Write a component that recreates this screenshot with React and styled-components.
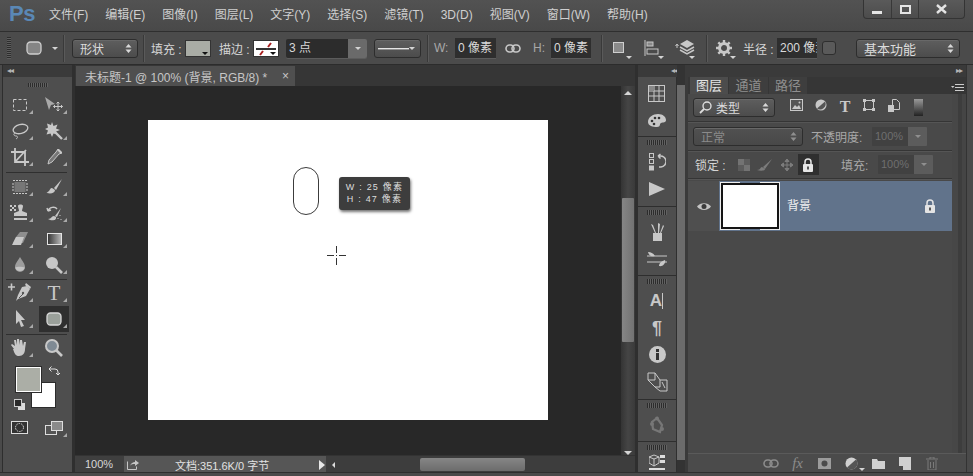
import React from "react";
import styled, { createGlobalStyle } from "styled-components";

const Global = createGlobalStyle`
  html, body { margin: 0; padding: 0; background: #4a4a4a; }
  * { box-sizing: border-box; }
`;
const FONT = `"Liberation Sans", "Noto Sans CJK SC", sans-serif`;
const Window = styled.div`
  width: 973px; height: 476px; overflow: hidden; display: flex; flex-direction: column;
  background: #4a4a4a; color: #d6d6d6; font: 12px ${FONT};
`;
const TitleBar = styled.header`
  height: 32px; display: flex; align-items: flex-start; border-bottom: 1px solid #2f2f2f;
  background: linear-gradient(#525252, #494949); padding-left: 9px;
`;
const Logo = styled.div`
  width: 40px; margin-top: 1px; font: bold 22px/26px "Liberation Sans", sans-serif; color: #5a88b6; letter-spacing: -0.5px;
`;
const Menu = styled.nav`display: flex; flex: 1; gap: 17px; padding-top: 7px;`;
const MenuItem = styled.span`font-size: 12px; line-height: 17px; color: #cfcfcf; white-space: nowrap;`;
const WinButtons = styled.div`
  display: flex; height: 19px; margin-right: 8px; border: 1px solid #343434; border-top: 0; border-radius: 0 0 4px 4px;
  background: linear-gradient(#5a5a5a, #4c4c4c);
`;
const WinButton = styled.div`
  width: ${p => p.$w}px; display: flex; align-items: center; justify-content: center;
  & + & { border-left: 1px solid #383838; }
`;

const OptionsBar = styled.div`
  height: 33px; display: flex; align-items: center; padding-left: 7px; border-bottom: 1px solid #2c2c2c; background: #4b4b4b;
`;
const VGrip = styled.div`
  width: 4px; height: 22px;
  background: repeating-linear-gradient(#2d2d2d 0 1px, #5d5d5d 1px 2px);
`;
const OptDivider = styled.div`width: 1px; height: 27px; margin-left: ${p => p.$ml}px; background: #393939; box-shadow: 1px 0 0 #5a5a5a;`;
const OptSlot = styled.div`
  width: ${p => p.$w}px; margin-left: ${p => p.$ml}px; height: 20px; position: relative; display: flex; align-items: center; justify-content: flex-start;
`;
const OptLabel = styled.span`
  width: ${p => p.$w}px; margin-left: ${p => p.$ml}px; white-space: nowrap; font-size: 12px; color: ${p => p.$dim ? "#a8a8a8" : "#d6d6d6"};
`;
const Select = styled.div`
  width: ${p => p.$w}px; height: ${p => p.$h || 19}px; margin-left: ${p => p.$ml || 0}px; border: 1px solid #2d2d2d; border-radius: 3px;
  background: ${p => p.$dim ? "linear-gradient(#515151,#484848)" : "linear-gradient(#5e5e5e,#4c4c4c)"};
  box-shadow: inset 0 1px 0 #686868; display: flex; align-items: center; justify-content: space-between;
  padding: 0 5px 0 ${p => p.$pl || 7}px; color: ${p => p.$dim ? "#8b8b8b" : "#dcdcdc"}; font-size: ${p => p.$fs || 12}px; white-space: nowrap;
`;
const SelectLabel = styled.span`display: flex; align-items: center; gap: 4px;`;
const Swatch = styled.div`
  width: 26px; height: 17px; margin-left: ${p => p.$ml}px; position: relative; border: 1px solid #333; background: ${p => p.$bg};
`;
const SwatchCaret = styled.i`
  position: absolute; right: 2px; bottom: 1px; width: 0; height: 0; border: 3px solid transparent; border-top-color: #111; border-bottom: 0;
`;
const Combo = styled.div`
  width: 81px; height: 19px; margin-left: ${p => p.$ml}px; display: flex; border-radius: 2px; overflow: hidden; box-shadow: 0 1px 0 #5c5c5c;
`;
const ComboText = styled.div`flex: 1; background: #2c2c2c; padding-left: 3px; font-size: 12px; line-height: 19px; color: #d8d8d8;`;
const ComboBtn = styled.div`
  width: 19px; background: #6a6a6a; display: flex; align-items: center; justify-content: center;
`;
const Caret = styled.i`
  display: block; width: 0; height: 0; border: 3px solid transparent; border-top-color: #d4d4d4; border-bottom: 0;
`;
const CornerCaret = styled(Caret)`position: absolute; right: 0; bottom: -1px;`;
const NumInput = styled.div`
  width: ${p => p.$w}px; height: 20px; margin-left: ${p => p.$ml}px; background: #2e2e2e; overflow: hidden; white-space: nowrap;
  padding-left: 3px; font-size: 12px; line-height: 20px; color: #dadada; box-shadow: 0 1px 0 #5c5c5c;
`;
const CheckBox = styled.div`
  width: 14px; height: 14px; margin-left: ${p => p.$ml}px; border: 1px solid #2e2e2e; border-radius: 3px; background: #5a5a5a;
`;

const Workspace = styled.main`height: 407px; display: flex; padding-left: 2px;`;
const Bottom = styled.div`flex: 1; background: #4a4a4a; border-top: 1px solid #2e2e2e;`;

const ToolPanel = styled.aside`
  width: 73px; display: flex; flex-direction: column; background: #4e4e4e; border-left: 1px solid #2e2e2e; border-right: 3px solid #2f2f2f;
`;
const CollapseStrip = styled.div`
  height: 12px; flex: none; display: flex; align-items: center; padding: 0 ${p => p.$pr || 4}px 0 ${p => p.$pl || 4}px; background: #3a3a3a;
  justify-content: ${p => p.$j || "flex-start"}; font-size: 8px; line-height: 12px; letter-spacing: -1px; color: #b5b5b5;
`;
const HGrip = styled.div`
  width: 20px; height: ${p => p.$h || 5}px; margin: ${p => p.$m || "3px auto"};
  background: repeating-linear-gradient(90deg, #2c2c2c 0 1px, #616161 1px 2px);
`;
const GripBox = styled.div`height: ${p => p.$h}px; padding-top: ${p => p.$pt}px;`;
const ToolGrid = styled.div`display: grid; grid-template-columns: 34px 34px; grid-auto-rows: 26px;`;
const ToolDivider = styled.div`
  height: ${p => p.$h}px; position: relative;
  &::after { content: ""; position: absolute; left: 3px; right: 5px; top: ${p => p.$t}px; height: 1px; background: #2f2f2f; }
`;
const Tool = styled.div`
  position: relative; display: flex; align-items: center; justify-content: center; margin: 0 2px;
  background: ${p => p.$active ? "#2f2f2f" : "transparent"};
  ${p => p.$more && `&::after { content:""; position:absolute; right:2px; bottom:4px; width:0; height:0; border-style:solid; border-width:0 0 4px 4px; border-color:transparent transparent #a9a9a9 transparent; }`}
`;
const Swatches = styled.div`height: 54px; position: relative;`;
const Fg = styled.div`position: absolute; z-index: 1; left: 13px; top: 6px; width: 25px; height: 25px; background: #abaea6; border: 1px solid #fff; box-shadow: 0 0 0 1px #2c2c2c;`;
const Bg = styled.div`position: absolute; left: 28px; top: 21px; width: 25px; height: 26px; background: #fff; border: 1px solid #2c2c2c;`;
const SwapIcon = styled.div`position: absolute; left: 44px; top: 3px;`;
const DefaultIcon = styled.div`position: absolute; left: 11px; top: 38px;`;
const MaskRow = styled.div`display: grid; grid-template-columns: 34px 34px; height: 26px;`;

const DocColumn = styled.section`width: 562px; display: flex; flex-direction: column; background: #3b3b3b; border-right: 2px solid #2f2f2f;`;
const TabStrip = styled.div`height: 21px; display: flex; background: #363636; padding-top: 1px;`;
const DocTab = styled.div`
  width: 219px; margin-left: 1px; display: flex; align-items: center; justify-content: space-between; padding: 0 6px 0 9px;
  background: #4f4f4f; color: #c6c6c6; font-size: 12px; white-space: nowrap;
`;
const DocBody = styled.div`flex: 1; display: flex; min-height: 0;`;
const Viewport = styled.div`width: 546px; padding-bottom: 2px; background: #282828; display: flex; align-items: center; justify-content: center;`;
const Paper = styled.div`width: 400px; height: 300px; background: #fff; position: relative;`;
const DrawnShape = styled.div`position: absolute; left: 145px; top: 47px; width: 26px; height: 48px; border: 1px solid #3c3c3c; border-radius: 13px;`;
const SizeTip = styled.div`
  position: absolute; left: 191px; top: 57px; width: 71px; height: 33px; border-radius: 3px; background: #3d3d3d;
  box-shadow: 1px 2px 3px rgba(0,0,0,.55); padding-top: 4px; text-align: center; color: #dedede; font-size: 9px; line-height: 12px; letter-spacing: 1.2px; white-space: nowrap;
`;
const CrossCursor = styled.div`position: absolute; left: 179px; top: 126px; line-height: 0;`;
const VScroll = styled.div`
  flex: 1; background: linear-gradient(90deg,#343434,#454545 50%,#3a3a3a); display: flex; flex-direction: column; align-items: center; padding-top: 5px;
`;
const Arrow = styled.i`
  display: block; width: 0; height: 0; border: 4px solid transparent; border-top: 0; border-bottom-color: #d5d5d5;
  ${p => p.$down && "transform: rotate(180deg);"}
`;
const VThumb = styled.div`width: 12px; height: 144px; margin-top: 103px; background: linear-gradient(90deg,#858585,#727272); border-radius: 1px;`;
const VTrackRest = styled.div`flex: 1;`;
const StatusBar = styled.div`height: 18px; display: flex; align-items: stretch; background: #3f3f3f; border-top: 1px solid #333; margin-bottom: -1px;`;
const ZoomValue = styled.div`width: 49px; padding-left: 10px; line-height: 16px; font-size: 11px; color: #d8d8d8;`;
const DocInfo = styled.div`
  width: 202px; background: #565656; display: flex; align-items: center; padding-left: 2px; font-size: 11px; color: #e2e2e2; white-space: nowrap;
`;
const DocInfoText = styled.span`margin-left: 35px; flex: 1;`;
const PlayMark = styled.i`width: 0; height: 0; margin-right: 1px; border: 5px solid transparent; border-right: 0; border-left: 6px solid #e8e8e8;`;
const HScroll = styled.div`flex: 1; display: flex; align-items: center; padding-left: 6px; background: #3d3d3d;`;
const LeftMark = styled.i`width: 0; height: 0; border: 3px solid transparent; border-left: 0; border-right: 3px solid #ddd;`;
const HThumb = styled.div`width: 105px; height: 13px; margin-left: 85px; background: linear-gradient(#868686,#6c6c6c); border-radius: 2px;`;

const DockWrap = styled.aside`width: 40px; display: flex; flex-direction: column; background: #4e4e4e; border-left: 1px solid #2f2f2f; border-right: 1px solid #2f2f2f;`;
const DockHead = styled(CollapseStrip)`justify-content: center; padding-left: 36px; overflow: visible;`;
const DockGroup = styled.div`
  height: ${p => p.$h}px; flex: none; border-bottom: 1px solid ${p => p.$last ? "transparent" : "#2e2e2e"}; display: flex; flex-direction: column; align-items: center;
  padding-top: ${p => p.$pt || 0}px;
`;
const DockGripBox = styled.div`height: 11px; flex: none; padding-top: 3px;`;
const DockItem = styled.div`height: ${p => p.$h || 27}px; display: flex; align-items: center; justify-content: center; flex: none;`;
const Gutter = styled.div`
  width: 11px; background: #6b6b6b; display: flex; flex-direction: column; justify-content: space-between;
  border-right: 3px solid #3a3a3a;
`;
const GutterCap = styled.div`height: ${p => p.$h}px; background: ${p => p.$c};`;

const LayersColumn = styled.section`width: 279px; display: flex; flex-direction: column; border-right: 1px solid #333;`;
const LayersBody = styled.div`flex: 1; display: flex; min-height: 0;`;
const LayersPanel = styled.div`width: 264px; display: flex; flex-direction: column; background: #494949;`;
const SideRail = styled.div`flex: 1; background: linear-gradient(90deg,#474747 0 6px,#3d3d3d 6px 10px,#454545 10px);`;
const TabsRow = styled.div`height: 17px; flex: none; display: flex; background: #363636; padding-left: 2px; position: relative;`;
const PanelTab = styled.div`
  width: ${p => p.$w}px; text-align: center; font-size: 13px; line-height: 17px;
  background: ${p => p.$on ? "#4c4c4c" : "#3e3e3e"}; color: ${p => p.$on ? "#e4e4e4" : "#8f8f8f"}; margin-right: 1px;
`;
const PanelMenu = styled.div`position: absolute; right: 2px; top: 6px; line-height: 0;`;
const FilterRow = styled.div`
  height: 28px; display: flex; align-items: center; padding-left: 5px; border-bottom: 1px solid #353535; box-shadow: 0 1px 0 #555;
`;
const FilterIcon = styled.div`width: 24.4px; display: flex; justify-content: center; line-height: 0;`;
const FilterIcons = styled.div`display: flex; margin-left: 9px;`;
const ModeRow = styled.div`
  height: 29px; display: flex; align-items: center; padding-left: 5px; border-bottom: 1px solid #353535; box-shadow: 0 1px 0 #555;
`;
const LockRow = styled.div`
  height: 28px; display: flex; align-items: center; padding-left: 7px; border-bottom: 1px solid #353535; box-shadow: 0 1px 0 #555;
`;
const LockIcons = styled.div`display: flex; margin-left: 8px; align-items: center;`;
const LockIcon = styled.div`
  width: 21.5px; height: 21px; display: flex; align-items: center; justify-content: center; line-height: 0;
  background: ${p => p.$on ? "#2f2f2f" : "transparent"};
`;
const DimInput = styled.div`
  width: 55px; height: 19px; margin-left: 4px; display: flex; overflow: hidden; border-radius: 1px;
`;
const DimText = styled.div`flex: 1; background: #414141; color: #6f6f6f; font-size: 11px; line-height: 19px; padding-left: 3px;`;
const DimBtn = styled.div`width: 19px; background: #5c5c5c; display: flex; align-items: center; justify-content: center;`;
const DimCaret = styled(Caret)`border-top-color: #8f8f8f;`;
const LayerList = styled.div`flex: 1; padding-top: 2px;`;
const LayerRow = styled.div`height: 50px; display: flex; background: #61738b;`;
const EyeCell = styled.div`width: 31px; background: #4f4f4f; display: flex; align-items: center; justify-content: center;`;
const Thumb = styled.div`
  width: 58px; height: 46px; margin: 2px 0 0 2px; position: relative; background: #fff; border: 2px solid #151515;
  &::before {
    content: ""; position: absolute; inset: -3px;
    background:
      linear-gradient(#eee,#eee) 0 0/20px 1px no-repeat,
      linear-gradient(#eee,#eee) 100% 0/20px 1px no-repeat,
      linear-gradient(#eee,#eee) 0 100%/20px 1px no-repeat,
      linear-gradient(#eee,#eee) 100% 100%/20px 1px no-repeat,
      linear-gradient(#eee,#eee) 0 0/1px 100% no-repeat,
      linear-gradient(#eee,#eee) 100% 0/1px 100% no-repeat;
  }
`;
const LayerName = styled.div`margin-left: 8px; width: 137px; line-height: 50px; color: #f0f0f0; font-size: 12px;`;
const LayerLock = styled.div`display: flex; align-items: center; line-height: 0;`;
const ActionBar = styled.div`
  height: 19px; flex: none; display: flex; justify-content: flex-end; align-items: center; padding-right: 21px; border-top: 1px solid #5a5a5a; background: #4b4b4b;
`;
const ActionIcon = styled.div`width: 26.8px; display: flex; justify-content: center; line-height: 0; position: relative;`;

const S = ({ w = 20, h = 20, vb, children }) => (
  <svg width={w} height={h} viewBox={vb || `0 0 ${w} ${h}`} fill="none">{children}</svg>
);
const L = "#c8c8c8";
const M = "#a9a9a9";

const Marquee = () => <S><rect x="3.500" y="4.500" width="13" height="11" stroke={L} strokeDasharray="3 2" /></S>;
const MoveTool = () => <S w={22} h={20}><path d="M2 2l10 7-4 1-2 5z" fill={M} /><path d="M15 7v9M10.500 11.500h9M15 7l-1.500 1.500M15 7l1.500 1.500M15 16l-1.500-1.500M15 16l1.500-1.500M10.500 11.500l1.500-1.500M10.500 11.500l1.500 1.500M19.500 11.500l-1.500-1.500M19.500 11.500l-1.500 1.500" stroke={L} /></S>;
const Lasso = () => <S><ellipse cx="10.500" cy="8" rx="7.500" ry="4.500" transform="rotate(-14 10.500 8)" stroke={L} strokeWidth="1.300" /><path d="M5 12c-2 1-1 3 1 3s2 2 0 3" stroke={L} /></S>;
const Wand = () => <S><path d="M8 1l1.500 4 4-1.500-1.500 4 4 1.500-4 1.500 1.500 3-4-1-1.500 3.500-1.500-3.500-4 1 1.500-4-3-1.500 3-1.500-1-4 4 1.500z" fill={L} /><path d="M11 11l7 7" stroke={L} strokeWidth="2.400" /></S>;
const Crop = () => <S><path d="M5 1v14h14M1 5h14v14M5 15L16 3" stroke={L} strokeWidth="1.800" /></S>;
const Dropper = () => <S><path d="M14 2l4 4-3 1-7 8-4 2 1-4 7-8z" stroke={L} fill="#777" /><path d="M13 3l2-1 3 3-1 2z" fill={L} /></S>;
const Heal = () => <S><rect x="4.500" y="5" width="11" height="10" fill="#777" /><path d="M3 3.500h14M3 16.500h14M2 7h2M2 10h2M2 13h2M16 7h2M16 10h2M16 13h2" stroke={L} strokeDasharray="2 1" /></S>;
const Brush = () => <S><path d="M18 2l-8 9 2 2z" fill={L} /><path d="M8 11c-2 0-2 2-3 3s-3 2-2 2c4 1 8 0 8-3z" fill={L} /></S>;
const Stamp = () => <S w={22} h={20}><path d="M1 2h2v2H1zM5 2h2v2H5zM3 4h2v2H3zM1 6h2v2H1zM5 6h2v2H5z" fill={L} /><path d="M9 3c0-2 5-2 5 0 0 2-1 3-1 5l5 2v3H5v-3l5-2c0-2-1-3-1-5zM5 15h13v2H5z" fill={L} /></S>;
const HistBrush = () => <S w={22} h={20}><path d="M5 8c1-4 7-5 9-2M5 8l-1-3M5 8l3-1" stroke={L} strokeWidth="1.400" /><path d="M18 5l-6 8 2 1zM11 13c-3 0-2 3-6 3 3 2 9 2 8-2z" fill={L} /><path d="M17 12v1M15 15v1M18 16v1" stroke={L} /></S>;
const Eraser = () => <S><path d="M10 3h8l-5 11H3l3-6z" fill="#8e8e8e" /><path d="M6 8h8l-3 8H2z" fill={L} /></S>;
const Gradient = () => (
  <S>
    <defs><linearGradient id="grd"><stop offset="0" stopColor="#333" /><stop offset="1" stopColor="#bbb" /></linearGradient></defs>
    <rect x="3.500" y="4.500" width="14" height="11" fill="url(#grd)" stroke="#e4e4e4" />
  </S>
);
const Drop = () => <S><path d="M10 2c3 5 5 7 5 10a5 5 0 0 1-10 0c0-3 2-5 5-10z" fill="#9d9d9d" /><path d="M5.200 12.500c2-1 7-1 9.600 0a5 5 0 0 1-9.600 0z" fill="#c4c4c4" /></S>;
const Sponge = () => <S><circle cx="8" cy="8" r="6" fill={L} /><path d="M12 12l6 6" stroke={L} strokeWidth="2.600" /></S>;
const Pen = () => <S w={26} h={22}><path d="M1 5h7M4.500 1.500v7" stroke={L} strokeWidth="1.600" /><path d="M20 4l3 3-4 7-8 3-2 2 2-6 4-8z" fill={L} /><path d="M12 16l4-4" stroke="#555" /><circle cx="16" cy="11" r="1.200" fill="#555" /><path d="M19 1l5 4-1 2-5-4z" fill={L} /></S>;
const TypeT = styled.span`font: ${p => p.$size || 21}px/1 "Liberation Serif", serif; color: ${p => p.$c || L};`;
const PathSelect = () => <S><path d="M6 1l9 10h-4l3 6-3 1-2-6-3 3z" fill={L} /></S>;
const RoundRectTool = ({ c = "#9aa09a", s = "#d8d8d8" }) => <S><rect x="3" y="4" width="14" height="12" rx="3.500" fill={c} stroke={s} strokeWidth="1.300" /></S>;
const Hand = () => <S w={22} h={20}><path d="M5 11L2 7l1-1 3 2-1-6h2l1 5V1h2l1 6V2h2l1 6 1-4h2l-1 7c0 4-2 7-6 7-3 0-4-1-6-7z" fill={L} /></S>;
const Loupe = () => <S w={20} h={20}><circle cx="8" cy="8" r="6" fill="#7f8a94" stroke={L} strokeWidth="2" /><path d="M12 12l6 6" stroke={L} strokeWidth="2.600" /></S>;
const Swap = () => <S w={13} h={13}><path d="M2 5h6q3 0 3 3v3M2 5l2.500-2.500M2 5l2.500 2.500M11 11l-2-2M11 11l2-2" stroke="#e0e0e0" /></S>;
const DefaultColors = () => <S w={11} h={11}><rect x="4" y="4" width="7" height="7" fill="#ddd" /><rect x=".5" y=".5" width="7" height="7" fill="#2a2a2a" stroke="#ccc" /></S>;
const MaskMode = () => <S w={18} h={14}><rect x=".5" y=".5" width="16" height="12" stroke="#ddd" fill="#333" /><circle cx="8.500" cy="6.500" r="4" stroke="#ddd" strokeDasharray="1.500 1" /></S>;
const ScreenMode = () => <S w={18} h={14}><rect x=".5" y="4.500" width="11" height="9" fill="#555" stroke="#ddd" /><rect x="6.500" y=".5" width="11" height="9" fill="#8a8a8a" stroke="#ddd" /></S>;

const GridPanel = () => <S w={18} h={18}><rect x=".5" y=".5" width="16" height="16" stroke={L} /><path d="M6 .5v16M11 .5v16M.5 6h16M.5 11h16" stroke={L} /><rect x="1" y="1" width="5" height="5" fill="#888" /></S>;
const Palette = () => <S w={20} h={16}><path d="M1 9c0-5 5-8 10-8s8 3 8 6-3 2-5 3 0 4-4 4-9-1-9-5z" fill={L} /><circle cx="5" cy="8" r="1.300" fill="#333" /><circle cx="8" cy="5" r="1.300" fill="#333" /><circle cx="12" cy="5" r="1.300" fill="#333" /><circle cx="7" cy="11" r="1.300" fill="#333" /></S>;
const History = () => <S w={17} h={18}><rect x=".5" y=".5" width="4" height="4" stroke={L} /><rect x=".5" y="6.500" width="4" height="4" stroke={L} /><rect y="12.500" width="5" height="5" fill={L} /><path d="M9 3h2a5 5 0 0 1 1 11h-2M9 3l2.500-2M9 3l2.500 2.500" stroke={L} strokeWidth="1.500" /></S>;
const Play = () => <S w={18} h={14}><path d="M1 0l16 7-16 7z" fill={L} /></S>;
const BrushCup = () => <S w={16} h={20}><path d="M4 11h9v8H4z" fill={L} /><path d="M6 11L2 2l2 1 3 8zM9 11V1l2 1-1 9zM11 11l3-8 1 1-3 7z" fill={L} /></S>;
const Sliders = () => <S w={20} h={16}><path d="M0 5h20M0 11h20" stroke={L} /><path d="M1 1c3 0 5 1 7 4-3 1-6 0-7-4zM12 15c0-3 3-5 6-6 1 3-2 7-6 6z" fill={L} /></S>;
const SansGlyph = styled(TypeT)`font-family: "Liberation Sans", sans-serif; font-weight: 700;`;
const CharPanel = () => <><SansGlyph $size={17}>A</SansGlyph><S w={2} h={16}><path d="M.5 0v16" stroke={L} /></S></>;
const ParaPanel = () => <SansGlyph $size={18}>¶</SansGlyph>;
const InfoPanel = () => <S w={17} h={17}><circle cx="8.500" cy="8.500" r="8.500" fill={L} /><rect x="7" y="3" width="3" height="3" fill="#333" /><rect x="7" y="7" width="3" height="7" fill="#333" /></S>;
const Trans = () => <S w={21} h={20}><path d="M1 1h7l5 7v7M1 1v7l7 7h5M8 1v7H1" stroke={L} /><path d="M13 8h7v11h-7l-5-4" stroke={L} /><path d="M15 10l3 6" stroke={L} /></S>;
const Mesh = () => <S w={16} h={18}><path d="M8 2L3 6l1 7 7 3 2-7z" stroke="#777" strokeWidth="2.200" /><circle cx="8" cy="2.500" r="2" fill="#777" /><circle cx="3" cy="8" r="2" fill="#777" /><circle cx="13" cy="13" r="2" fill="#777" /></S>;
const Cube = () => <S w={16} h={16}><path d="M5 1l5 2v6l-5 3-5-3V3z" stroke={L} /><path d="M0 3l5 2 5-2M5 5v7" stroke={L} /><path d="M11 1h5v3h-5zM11 6h5v3h-5zM0 14h16v2H0z" fill="#ddd" /></S>;

const UpDown = ({ c = "#d8d8d8" }) => <S w={7} h={11}><path d="M3.500 1L6.500 4.500h-6zM3.500 10L6.500 6.500h-6z" fill={c} /></S>;
const LinkIcon = ({ c = L }) => <S w={16} h={9}><rect x="1" y="1" width="8" height="7" rx="3.500" stroke={c} strokeWidth="1.600" /><rect x="7" y="1" width="8" height="7" rx="3.500" stroke={c} strokeWidth="1.600" /></S>;
const PadLock = ({ c = "#e6e6e6" }) => <S w={12} h={14}><path d="M3 6V4a3 3 0 0 1 6 0v2" stroke={c} strokeWidth="1.500" /><rect x="1" y="6" width="10" height="8" rx="1" fill={c} /><rect x="5" y="8.500" width="2" height="3" fill="#555" /></S>;
const Eye = () => <S w={14} h={9}><path d="M0 4.500C3 0 11 0 14 4.500 11 9 3 9 0 4.500z" fill="#c4c4c4" /><circle cx="7" cy="4.500" r="2.500" fill="#3b3b3b" /></S>;
const Gear = () => <S w={16} h={16}><circle cx="8" cy="8" r="4.500" stroke={L} strokeWidth="3" /><path d="M8 0v3M8 13v3M0 8h3M13 8h3M2.300 2.300l2.100 2.100M11.600 11.600l2.100 2.100M2.300 13.700l2.100-2.100M11.600 4.400l2.100-2.100" stroke={L} strokeWidth="2.400" /></S>;

function App() {
  return (
    <>
      <Global />
      <Window>
        <TitleBar>
          <Logo>Ps</Logo>
          <Menu>
            {["文件(F)", "编辑(E)", "图像(I)", "图层(L)", "文字(Y)", "选择(S)", "滤镜(T)", "3D(D)", "视图(V)", "窗口(W)", "帮助(H)"].map(m => <MenuItem key={m}>{m}</MenuItem>)}
          </Menu>
          <WinButtons>
            <WinButton $w={27}><S w={11} h={12}><rect y="8" width="10" height="3" fill="#e4e4e4" /></S></WinButton>
            <WinButton $w={27}><S w={11} h={9}><rect x="1" y="1" width="9" height="7" stroke="#e4e4e4" strokeWidth="2" /></S></WinButton>
            <WinButton $w={46}><S w={11} h={10}><path d="M1 1l9 8M10 1L1 9" stroke="#e4e4e4" strokeWidth="2.400" /></S></WinButton>
          </WinButtons>
        </TitleBar>

        <OptionsBar>
          <VGrip />
          <OptSlot $ml={13} $w={20}><RoundRectTool c="#858585" s="#cfcfcf" /></OptSlot>
          <OptSlot $ml={8} $w={6}><Caret /></OptSlot>
          <OptDivider $ml={5} />
          <Select $w={66} $ml={8}>形状<UpDown /></Select>
          <OptDivider $ml={5} />
          <OptLabel $ml={7} $w={30}>填充 :</OptLabel>
          <Swatch $ml={4} $bg="#a9aca5"><SwatchCaret /></Swatch>
          <OptLabel $ml={8} $w={30}>描边 :</OptLabel>
          <Swatch $ml={4} $bg="#fff">
            <S w={24} h={15}><path d="M2 8h20" stroke="#333" strokeWidth="2" /><path d="M17 2l-3 4M9 10l-3 4" stroke="#a22" strokeWidth="2" /></S>
            <SwatchCaret />
          </Swatch>
          <Combo $ml={7}><ComboText>3 点</ComboText><ComboBtn><Caret /></ComboBtn></Combo>
          <Select $w={47} $ml={7} $pl={3}><S w={35} h={3}><rect y="1" width="35" height="1.500" fill="#eee" /></S><Caret /></Select>
          <OptDivider $ml={6} />
          <OptLabel $ml={6} $w={15} $dim>W:</OptLabel>
          <NumInput $ml={6} $w={41}>0 像素</NumInput>
          <OptSlot $ml={9} $w={16}><LinkIcon /></OptSlot>
          <OptLabel $ml={12} $w={13} $dim>H:</OptLabel>
          <NumInput $ml={5} $w={40}>0 像素</NumInput>
          <OptDivider $ml={10} />
          <OptSlot $ml={11} $w={19}>
            <S w={13} h={13}><rect x=".5" y=".5" width="10" height="10" fill="#8a8a8a" stroke="#cfcfcf" /></S><CornerCaret />
          </OptSlot>
          <OptSlot $ml={12} $w={20}>
            <S w={16} h={16}><path d="M1 0v16" stroke={L} /><rect x="3" y="2" width="6" height="4" fill="#8a8a8a" stroke={L} /><rect x="3" y="9" width="11" height="5" stroke={L} /></S><CornerCaret />
          </OptSlot>
          <OptSlot $ml={11} $w={20}>
            <S w={20} h={16}><path d="M2 8V5M0.500 6l1.500-2 1.500 2" stroke={L} /><path d="M12 0l7 4-7 4-7-4z" fill={L} /><path d="M5 7l7 4 7-4M5 10l7 4 7-4" stroke={L} strokeWidth="1.500" /></S><CornerCaret />
          </OptSlot>
          <OptDivider $ml={11} />
          <OptSlot $ml={9} $w={20}><Gear /><CornerCaret /></OptSlot>
          <OptLabel $ml={7} $w={28}>半径 :</OptLabel>
          <NumInput $ml={6} $w={40}>200 像素</NumInput>
          <CheckBox $ml={5} />
          <Select $w={104} $ml={20} $pl={7} $fs={13}>基本功能<UpDown /></Select>
        </OptionsBar>

        <Workspace>
          <ToolPanel>
            <CollapseStrip>◂◂</CollapseStrip>
            <GripBox $h={15} $pt={6}><HGrip $h={4} $m="0 auto" /></GripBox>
            <ToolGrid>
              <Tool $more><Marquee /></Tool><Tool $more><MoveTool /></Tool>
              <Tool $more><Lasso /></Tool><Tool $more><Wand /></Tool>
              <Tool $more><Crop /></Tool><Tool $more><Dropper /></Tool>
            </ToolGrid>
            <ToolDivider $h={4} $t={2} />
            <ToolGrid>
              <Tool $more><Heal /></Tool><Tool $more><Brush /></Tool>
              <Tool $more><Stamp /></Tool><Tool $more><HistBrush /></Tool>
              <Tool $more><Eraser /></Tool><Tool $more><Gradient /></Tool>
              <Tool $more><Drop /></Tool><Tool $more><Sponge /></Tool>
            </ToolGrid>
            <ToolDivider $h={2} $t={1} />
            <ToolGrid>
              <Tool $more><Pen /></Tool><Tool $more><TypeT>T</TypeT></Tool>
              <Tool $more><PathSelect /></Tool><Tool $more $active><RoundRectTool /></Tool>
            </ToolGrid>
            <ToolDivider $h={3} $t={2} />
            <ToolGrid>
              <Tool $more><Hand /></Tool><Tool><Loupe /></Tool>
            </ToolGrid>
            <Swatches>
              <Fg /><Bg />
              <SwapIcon><Swap /></SwapIcon>
              <DefaultIcon><DefaultColors /></DefaultIcon>
            </Swatches>
            <MaskRow>
              <Tool><MaskMode /></Tool><Tool $more><ScreenMode /></Tool>
            </MaskRow>
          </ToolPanel>

          <DocColumn>
            <TabStrip>
              <DocTab>未标题-1 @ 100% (背景, RGB/8) *<span>×</span></DocTab>
            </TabStrip>
            <DocBody>
              <Viewport>
                <Paper>
                  <DrawnShape />
                  <SizeTip>W : 25 像素<br />H : 47 像素</SizeTip>
                  <CrossCursor>
                    <S w={19} h={19}><path d="M0 9.500h7M12 9.500h7M9.500 0v7M9.500 12v7" stroke="#333" /><rect x="9" y="9" width="1" height="1" fill="#333" /></S>
                  </CrossCursor>
                </Paper>
              </Viewport>
              <VScroll>
                <Arrow />
                <VThumb />
                <VTrackRest />
                <Arrow $down />
              </VScroll>
            </DocBody>
            <StatusBar>
              <ZoomValue>100%</ZoomValue>
              <DocInfo>
                <S w={14} h={12}><path d="M1.500 2.500v8h9v-3" stroke="#c6c6c6" /><path d="M4 7c1-3 3-4 5-4V1l4 3-4 3V5c-2 0-4 0-5 2z" fill="#c6c6c6" /></S>
                <DocInfoText>文档:351.6K/0 字节</DocInfoText>
                <PlayMark />
              </DocInfo>
              <HScroll><LeftMark /><HThumb /></HScroll>
            </StatusBar>
          </DocColumn>

          <DockWrap>
            <DockHead>◂◂</DockHead>
            <DockGroup $h={60} $pt={3}>
              <DockItem><GridPanel /></DockItem>
              <DockItem><Palette /></DockItem>
            </DockGroup>
            <DockGroup $h={70}>
              <DockGripBox><HGrip $h={5} $m="0" /></DockGripBox>
              <DockItem><History /></DockItem>
              <DockItem><Play /></DockItem>
            </DockGroup>
            <DockGroup $h={69}>
              <DockGripBox><HGrip $h={5} $m="0" /></DockGripBox>
              <DockItem><BrushCup /></DockItem>
              <DockItem><Sliders /></DockItem>
            </DockGroup>
            <DockGroup $h={124}>
              <DockGripBox><HGrip $h={5} $m="0" /></DockGripBox>
              <DockItem><CharPanel /></DockItem>
              <DockItem><ParaPanel /></DockItem>
              <DockItem><InfoPanel /></DockItem>
              <DockItem><Trans /></DockItem>
            </DockGroup>
            <DockGroup $h={42}>
              <DockGripBox><HGrip $h={5} $m="0" /></DockGripBox>
              <DockItem><Mesh /></DockItem>
            </DockGroup>
            <DockGroup $h={30} $last>
              <DockGripBox><HGrip $h={5} $m="0" /></DockGripBox>
              <DockItem $h={18}><Cube /></DockItem>
            </DockGroup>
          </DockWrap>

          <Gutter>
            <GutterCap $h={20} $c="#333" />
            <GutterCap $h={12} $c="#333" />
          </Gutter>

          <LayersColumn>
            <CollapseStrip $j="flex-end" $pr={4}>▸▸</CollapseStrip>
            <TabsRow>
              <PanelTab $on $w={38}>图层</PanelTab>
              <PanelTab $w={39}>通道</PanelTab>
              <PanelTab $w={38}>路径</PanelTab>
              <PanelMenu><S w={13} h={9}><path d="M0 3h3.500L1.800 5z" fill="#ccc" /><path d="M4 1.500h9M4 4.500h9M4 7.500h9" stroke="#ccc" /></S></PanelMenu>
            </TabsRow>
            <LayersBody>
              <LayersPanel>
                <FilterRow>
                  <Select $w={82} $h={19} $pl={5}>
                    <SelectLabel>
                      <S w={13} h={13}><circle cx="8" cy="5" r="4" stroke="#ddd" strokeWidth="1.400" /><path d="M5 8l-4 4" stroke="#ddd" strokeWidth="1.800" /></S>
                      类型
                    </SelectLabel>
                    <UpDown />
                  </Select>
                  <FilterIcons>
                    <FilterIcon><S w={13} h={12}><rect x=".5" y=".5" width="12" height="11" stroke={L} fill="#555" /><path d="M2 10l3-4 2 2 2-2 2 4z" fill={L} /><circle cx="9.500" cy="3.500" r="1" fill={L} /></S></FilterIcon>
                    <FilterIcon><S w={12} h={12}><circle cx="6" cy="6" r="5.500" fill={L} /><path d="M10 2.500L2 9.500A5.500 5.500 0 0 0 10 2.500z" fill="#555" /></S></FilterIcon>
                    <FilterIcon><TypeT $size={16} style={{ fontWeight: 700 }}>T</TypeT></FilterIcon>
                    <FilterIcon><S w={12} h={12}><rect x="1.500" y="1.500" width="9" height="9" stroke={L} /><path d="M0 0h3v3H0zM9 0h3v3H9zM0 9h3v3H0zM9 9h3v3H9z" fill={L} /></S></FilterIcon>
                    <FilterIcon><S w={12} h={14}><path d="M4.500 .5h4l3 3v7h-7z" stroke={L} /><rect y="6" width="6" height="7" fill={L} /></S></FilterIcon>
                    <FilterIcon><S w={9} h={17}><defs><linearGradient id="sw" x1="0" x2="0" y1="0" y2="1"><stop offset="0" stopColor="#999" /><stop offset="1" stopColor="#222" /></linearGradient></defs><rect width="9" height="17" fill="url(#sw)" /></S></FilterIcon>
                  </FilterIcons>
                </FilterRow>
                <ModeRow>
                  <Select $w={110} $dim $pl={7}>正常<UpDown c="#8f8f8f" /></Select>
                  <OptLabel $ml={8} $w={57} $dim>不透明度:</OptLabel>
                  <DimInput><DimText>100%</DimText><DimBtn><DimCaret /></DimBtn></DimInput>
                </ModeRow>
                <LockRow>
                  <OptLabel $w={30}>锁定 :</OptLabel>
                  <LockIcons>
                    <LockIcon><S w={12} h={12}><path d="M0 0h6v6H0zM6 6h6v6H6z" fill="#737373" /><path d="M6 0h6v6H6zM0 6h6v6H0z" fill="#5c5c5c" /></S></LockIcon>
                    <LockIcon><S w={16} h={12}><path d="M15 0L6 8l2 2zM5 8c-2 0-1 3-5 3 3 1 8 1 8-1z" fill="#7c7c7c" /></S></LockIcon>
                    <LockIcon><S w={14} h={14}><path d="M7 1v12M1 7h12M7 1L5 3.500h4zM7 13l-2-2.500h4zM1 7l2.500-2v4zM13 7l-2.500-2v4z" stroke="#7c7c7c" fill="#7c7c7c" /></S></LockIcon>
                    <LockIcon $on><PadLock /></LockIcon>
                  </LockIcons>
                  <OptLabel $ml={22} $w={33} $dim>填充:</OptLabel>
                  <DimInput><DimText>100%</DimText><DimBtn><DimCaret /></DimBtn></DimInput>
                </LockRow>
                <LayerList>
                  <LayerRow>
                    <EyeCell><Eye /></EyeCell>
                    <Thumb />
                    <LayerName>背景</LayerName>
                    <LayerLock><PadLock c="#e4e4e4" /></LayerLock>
                  </LayerRow>
                </LayerList>
              </LayersPanel>
              <SideRail />
            </LayersBody>
            <ActionBar>
              <ActionIcon><LinkIcon c="#8c8c8c" /></ActionIcon>
              <ActionIcon><TypeT $size={15} $c="#8c8c8c" style={{ fontStyle: "italic" }}>fx</TypeT></ActionIcon>
              <ActionIcon><S w={13} h={11}><rect width="13" height="11" fill="#9c9c9c" /><circle cx="6.500" cy="5.500" r="3" fill="#4b4b4b" /></S></ActionIcon>
              <ActionIcon><S w={13} h={13}><circle cx="6.500" cy="6.500" r="6" fill="#d0d0d0" /><path d="M11 2.500L2 10.500A6 6 0 0 0 11 2.500z" fill="#555" /></S><CornerCaret /></ActionIcon>
              <ActionIcon><S w={13} h={11}><path d="M0 1h5l1 2h7v8H0z" fill="#d0d0d0" /></S></ActionIcon>
              <ActionIcon><S w={12} h={13}><path d="M0 0h12v13H4V9H0z" fill="#d0d0d0" /></S></ActionIcon>
              <ActionIcon><S w={12} h={13}><path d="M0 2h12M4 2V0h4v2M2 3v10h8V3M4.500 5v6M7.500 5v6" stroke="#7a7a7a" /></S></ActionIcon>
            </ActionBar>
          </LayersColumn>
        </Workspace>
        <Bottom />
      </Window>
    </>
  );
}
export default App;
